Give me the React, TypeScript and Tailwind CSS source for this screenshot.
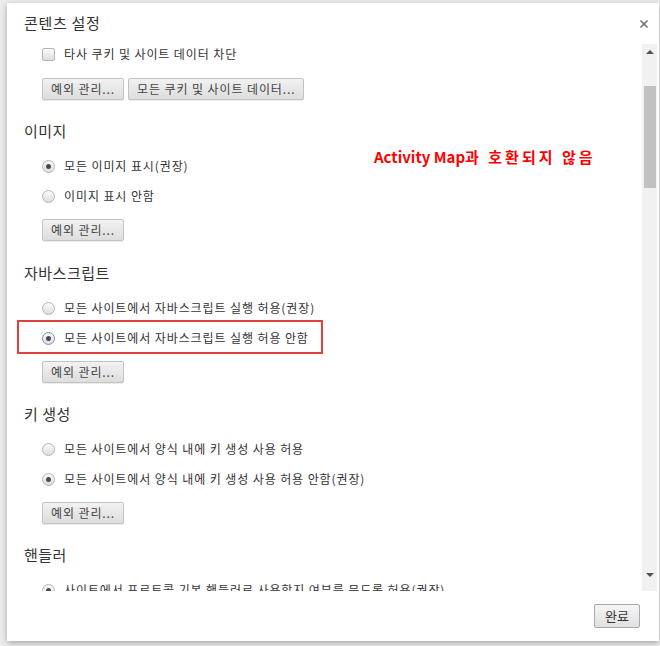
import { X } from "lucide-react";

const font = { fontFamily: '"Noto Sans CJK KR", "Noto Sans", sans-serif' };

function Radio({ checked, focused }: { checked?: boolean; focused?: boolean }) {
  return (
    <span
      className={`flex h-[13px] w-[13px] shrink-0 items-center justify-center rounded-full border bg-gradient-to-b from-[#fafafa] to-[#dedede] ${
        focused ? "border-[#6f93c9]" : "border-[#b5b5b5]"
      }`}
    >
      {checked && <span className="h-[5px] w-[5px] rounded-full bg-[#4a4a4a]" />}
    </span>
  );
}

function RadioRow({ label, checked, focused }: { label: string; checked?: boolean; focused?: boolean }) {
  return (
    <div className="flex h-[20px] items-center gap-[9px] pl-[35px]">
      <Radio checked={checked} focused={focused} />
      <span className="whitespace-nowrap text-[12px] tracking-[0.9px] text-[#333]">{label}</span>
    </div>
  );
}

function Btn({ children }: { children: React.ReactNode }) {
  return (
    <button className="h-[22px] rounded-[2px] border border-[#c3c3c3] bg-gradient-to-b from-[#f2f2f2] to-[#dddddd] px-[8px] text-[12px] leading-none tracking-[0.9px] text-[#444] shadow-[0_1px_0_rgba(0,0,0,0.08)]">
      {children}
    </button>
  );
}

function Section({ title, className = "mt-[21px]", children }: { title: string; className?: string; children: React.ReactNode }) {
  return (
    <div className={className}>
      <div className="flex h-[20px] items-center pl-[17px] text-[15px] tracking-[0.5px] text-[#333]">{title}</div>
      <div className="mt-[15px] flex flex-col gap-[10px]">{children}</div>
    </div>
  );
}

function Exceptions() {
  return (
    <div className="mt-[3px] flex pl-[35px]">
      <Btn>예외 관리...</Btn>
    </div>
  );
}

export default function App() {
  return (
    <div className="h-[646px] w-[660px] overflow-hidden bg-[#ececec] pl-[7px] pt-[3px]" style={font}>
      <div className="relative flex h-[638px] w-[652px] flex-col bg-white shadow-[0_2px_6px_rgba(0,0,0,0.3)]">
        {/* header */}
        <div className="flex h-[41px] items-center justify-between pl-[17px] pr-[9px]">
          <h1 className="text-[15px] font-normal tracking-[0.7px] text-[#333]">콘텐츠 설정</h1>
          <X className="h-[12px] w-[12px] text-[#777]" strokeWidth={3.5} />
        </div>

        {/* body */}
        <div className="flex h-[547px]">
          <div className="relative flex-1 overflow-hidden">
            <div className="flex h-[20px] items-center gap-[9px] pl-[35px]">
              <span className="h-[13px] w-[13px] shrink-0 rounded-[2px] border border-[#b5b5b5] bg-gradient-to-b from-[#fafafa] to-[#dedede]" />
              <span className="text-[12px] tracking-[0.9px] text-[#333]">타사 쿠키 및 사이트 데이터 차단</span>
            </div>
            <div className="mt-[14px] flex gap-[4px] pl-[35px]">
              <Btn>예외 관리...</Btn>
              <Btn>모든 쿠키 및 사이트 데이터...</Btn>
            </div>

            <Section title="이미지">
              <RadioRow label="모든 이미지 표시(권장)" checked />
              <RadioRow label="이미지 표시 안함" />
              <Exceptions />
            </Section>

            <Section title="자바스크립트" className="mt-[22px]">
              <RadioRow label="모든 사이트에서 자바스크립트 실행 허용(권장)" />
              <RadioRow label="모든 사이트에서 자바스크립트 실행 허용 안함" checked focused />
              <Exceptions />
            </Section>

            <Section title="키 생성">
              <RadioRow label="모든 사이트에서 양식 내에 키 생성 사용 허용" />
              <RadioRow label="모든 사이트에서 양식 내에 키 생성 사용 허용 안함(권장)" checked />
              <Exceptions />
            </Section>

            <Section title="핸들러">
              <RadioRow label="사이트에서 프로토콜 기본 핸들러로 사용할지 여부를 묻도록 허용(권장)" checked />
            </Section>

            {/* annotations */}
            <div className="absolute left-[10px] top-[276px] h-[34px] w-[306px] border-2 border-[#e2403a]" />
            <div className="absolute left-[367px] top-[102px] whitespace-nowrap text-[15px] font-bold text-[#ff0000]">
              Activity Map<span className="tracking-[3px]">과 호환되지 않음</span>
            </div>
          </div>

          {/* scrollbar */}
          <div className="mr-[2px] flex w-[15px] flex-col items-center bg-[#f1f1f1]">
            <div className="flex h-[16px] items-center">
              <span className="h-0 w-0 border-x-[4px] border-b-[4px] border-x-transparent border-b-[#505050]" />
            </div>
            <div className="mt-[26px] h-[102px] w-[12px] bg-[#c1c1c1]" />
            <div className="flex-1" />
            <div className="mb-[8px] flex h-[16px] items-center">
              <span className="h-0 w-0 border-x-[4px] border-t-[4px] border-x-transparent border-t-[#505050]" />
            </div>
          </div>
        </div>

        {/* footer */}
        <div className="flex flex-1 items-start justify-end pr-[19px] pt-[13px]">
          <button className="h-[24px] w-[46px] rounded-[2px] border border-[#a9a9a9] bg-gradient-to-b from-[#f5f5f5] to-[#e0e0e0] text-[13px] text-[#333]">
            완료
          </button>
        </div>
      </div>
    </div>
  );
}
